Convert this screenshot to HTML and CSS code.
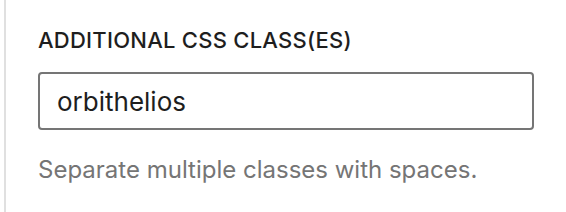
FILE: index.html
```html
<!DOCTYPE html>
<html lang="en">
<head>
    <meta charset="UTF-8">
    <meta name="viewport" content="width=device-width, initial-scale=1.0">
    <title>Advanced</title>
    <link rel="stylesheet" href="styles.css">
</head>
<body>
    <div class="panel">
        <div class="field">
            <label class="field-label" for="css-class">Additional CSS class(es)</label>
            <input class="field-input" id="css-class" type="text" value="orbithelios">
            <p class="field-help">Separate multiple classes with spaces.</p>
        </div>
    </div>
</body>
</html>
```

FILE: styles.css
```css
body {
    margin: 0;
    background: #fff;
    font-family: Inter, "Noto Sans", sans-serif;
    color: #1e1e1e;
}
.panel {
    margin-left: 4px;
    border-left: 2px solid #e0e0e0;
    min-height: 212px;
    padding: 24px 0 0 32px;
    box-sizing: border-box;
}
.field {
    width: 496px;
}
.field-label {
    display: block;
    font-size: 22px;
    font-weight: 500;
    line-height: 32px;
    letter-spacing: 0.25px;
    text-transform: uppercase;
    margin-bottom: 16px;
}
.field-input {
    display: block;
    box-sizing: border-box;
    width: 100%;
    height: 58px;
    margin: 0;
    padding: 0 17px;
    border: 2px solid #757575;
    border-radius: 4px;
    font-family: inherit;
    font-size: 26px;
    color: #1e1e1e;
    background: #fff;
    outline: none;
}
.field-help {
    margin: 24px 0 0;
    font-size: 24px;
    line-height: 32px;
    color: #757575;
}
```
